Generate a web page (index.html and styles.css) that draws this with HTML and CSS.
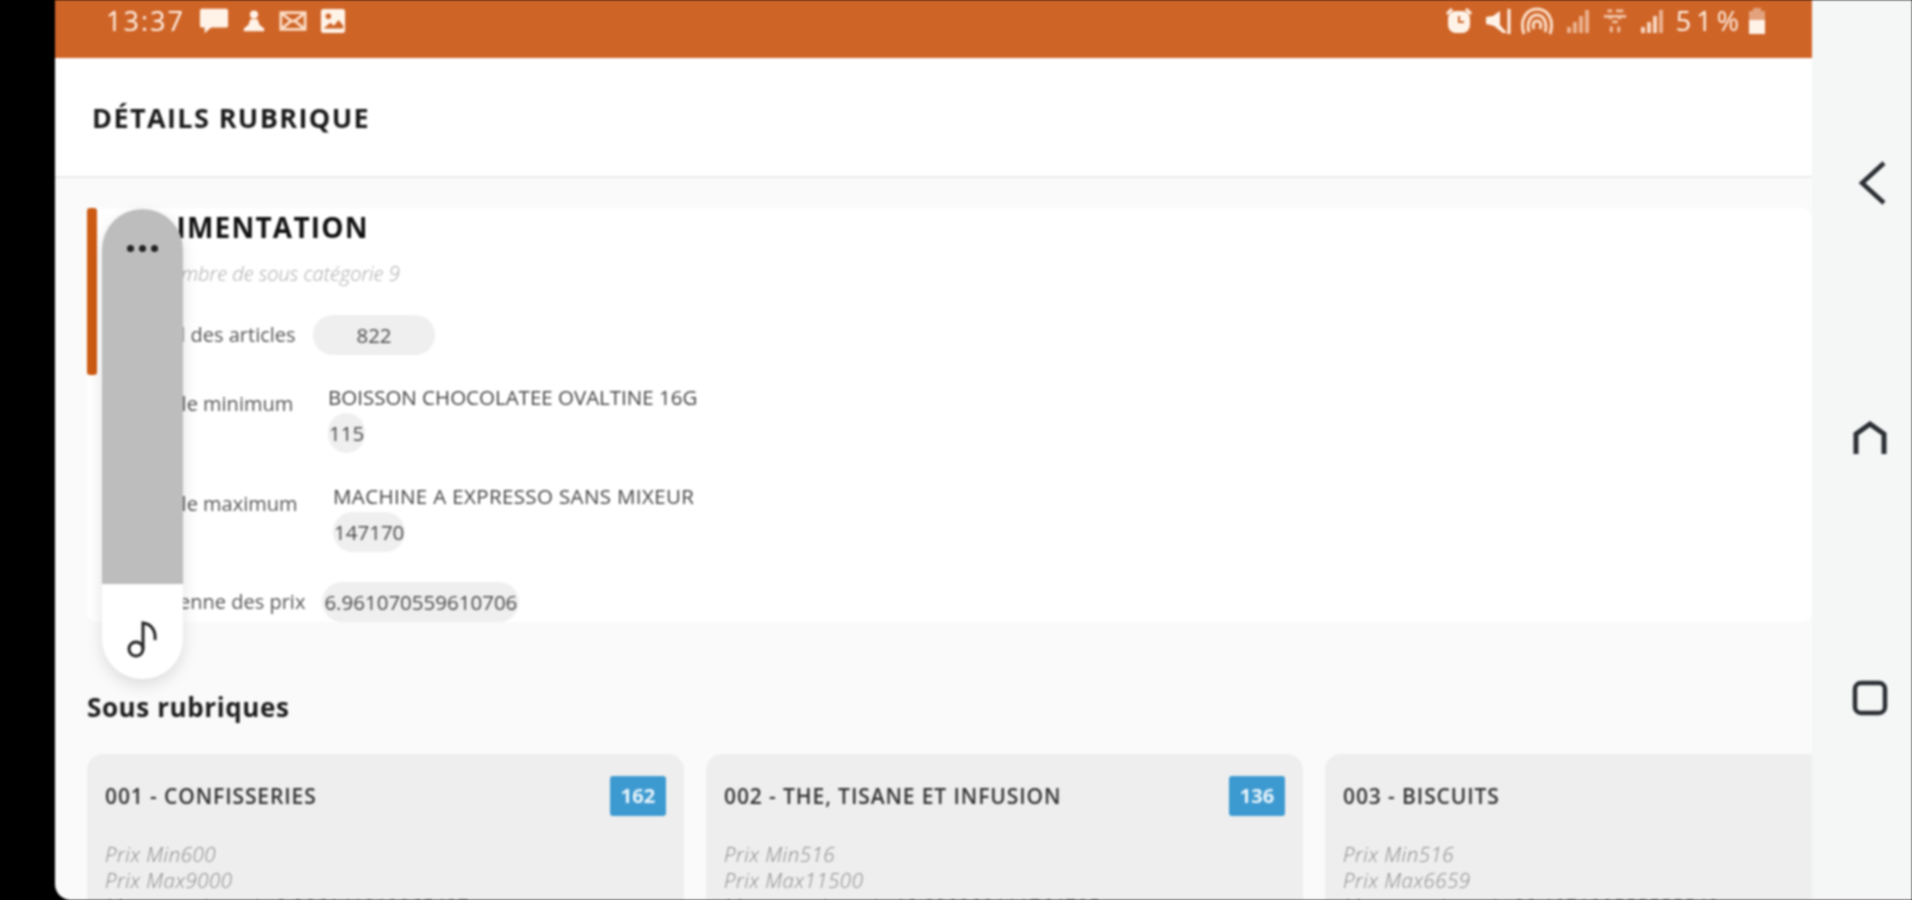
FILE: index.html
```html
<!DOCTYPE html>
<html lang="fr">
<head>
<meta charset="utf-8">
<title>Détails rubrique</title>
<link rel="stylesheet" href="styles.css">
</head>
<body>
<div class="device">
  <div class="bezel"></div>
  <main class="app">
    <div class="status">
      <div class="status-left">
        <span class="clock">13:37</span>
        <svg class="si" width="30" height="30" viewBox="0 0 32 30"><path d="M3 2h26a2 2 0 0 1 2 2v16a2 2 0 0 1-2 2H13l-7 6v-6H3a2 2 0 0 1-2-2V4a2 2 0 0 1 2-2z" fill="#fff3e8"/></svg>
        <svg class="si" width="24" height="26" viewBox="0 0 26 26"><circle cx="13" cy="6" r="4.500" fill="#fff3e8"/><path d="M9 11h8l2 6 5 4v3H2v-3l5-4z" fill="#fff3e8"/></svg>
        <svg class="si" width="28" height="24" viewBox="0 0 30 24"><path d="M2 3h26v18H2zM2 3l11 9-11 9M28 3l-11 9 11 9M13 12h4" fill="none" stroke="#fbdcc4" stroke-width="3"/></svg>
        <svg class="si" width="26" height="26" viewBox="0 0 28 28"><rect x="1" y="1" width="26" height="26" rx="3" fill="#fff3e8"/><circle cx="9" cy="9" r="3" fill="#cf6427"/><path d="M4 22l7-6 4 3 5-6 5 6v3H4z" fill="#cf6427"/></svg>
      </div>
      <div class="status-right">
        <svg class="si" width="28" height="28" viewBox="0 0 28 28"><rect x="3" y="4" width="22" height="22" rx="8" fill="#fff3e8"/><path d="M2 7l5-5M26 7l-5-5" stroke="#fff3e8" stroke-width="3"/><path d="M14 9v6h5" fill="none" stroke="#cf6427" stroke-width="2"/></svg>
        <svg class="si" width="28" height="28" viewBox="0 0 28 28"><path d="M1 10l7-1 7-5v14l7 8h-4l-9-7-8-2z" fill="#fff3e8"/><path d="M24 2v25" stroke="#fff3e8" stroke-width="3"/></svg>
        <svg class="si wide" width="34" height="28" viewBox="0 0 34 28"><path d="M4 27C-1 12 7 2 17 2s18 10 13 25M9 25C6 15 11 8 17 8s11 7 8 17M14 22c-2-5 0-8 3-8s5 3 3 8" fill="none" stroke="#fbdcc4" stroke-width="3"/></svg>
        <svg class="si" width="24" height="26" viewBox="0 0 24 26"><path d="M1 25v-6h4v6zM7 25V14h4v11zM13 25V8h4v17zM19 25V2h4v23z" fill="#eab08c"/></svg>
        <svg class="si" width="26" height="26" viewBox="0 0 28 28"><path d="M6 3h5M15 3h8M2 9h24M9 9v3M19 9v3M11 15h6M10 20v6M18 20v6" stroke="#f1c4a6" stroke-width="3"/></svg>
        <svg class="si" width="24" height="26" viewBox="0 0 24 26"><path d="M1 25v-6h4v6zM7 25V14h4v11zM13 25V8h4v17z" fill="#f6d6c0"/><path d="M19 25V2h4v23z" fill="#eab08c"/></svg>
        <span class="pct">51%</span>
        <svg class="si" width="20" height="28" viewBox="0 0 20 28"><path d="M6 1h8v3h4v9H2V4h4z" fill="#e3a27c"/><path d="M2 13h16v14H2z" fill="#fff3e8"/></svg>
      </div>
    </div>

    <header class="topbar"><h1>DÉTAILS RUBRIQUE</h1></header>

    <div class="content">
      <section class="summary">
        <span class="accent"></span>
        <h2>ALIMENTATION</h2>
        <p class="subtitle">Nombre de sous catégorie 9</p>
        <div class="row row-total">
          <span class="label">Total des articles</span>
          <span class="pill pill-total">822</span>
        </div>
        <div class="row row-min">
          <span class="label">Article minimum</span>
          <div class="val">
            <span class="name">BOISSON CHOCOLATEE OVALTINE 16G</span>
            <span class="pill pill-tight">115</span>
          </div>
        </div>
        <div class="row row-max">
          <span class="label">Article maximum</span>
          <div class="val">
            <span class="name name-wide">MACHINE A EXPRESSO SANS MIXEUR</span>
            <span class="pill pill-tight">147170</span>
          </div>
        </div>
        <div class="row row-avg">
          <span class="label">Moyenne des prix</span>
          <span class="pill pill-avg">6.961070559610706</span>
        </div>
      </section>

      <h3>Sous rubriques</h3>

      <div class="cards">
        <article class="card">
          <div class="card-head"><span class="card-title">001 - CONFISSERIES</span><span class="badge">162</span></div>
          <p class="meta">Prix Min600</p>
          <p class="meta">Prix Max9000</p>
          <p class="meta">Moyenne des prix 3.906141812865497</p>
        </article>
        <article class="card">
          <div class="card-head"><span class="card-title">002 - THE, TISANE ET INFUSION</span><span class="badge">136</span></div>
          <p class="meta">Prix Min516</p>
          <p class="meta">Prix Max11500</p>
          <p class="meta">Moyenne des prix 10.090909111764705</p>
        </article>
        <article class="card">
          <div class="card-head"><span class="card-title">003 - BISCUITS</span></div>
          <p class="meta">Prix Min516</p>
          <p class="meta">Prix Max6659</p>
          <p class="meta">Moyenne des prix 30.107180555555548</p>
        </article>
      </div>
    </div>
  </main>

  <nav class="softkeys">
    <svg width="30" height="44" viewBox="0 0 30 44"><path d="M26 2L4 22l22 20" fill="none" stroke="#2b2f33" stroke-width="4.500"/></svg>
    <svg width="36" height="34" viewBox="0 0 36 34"><path d="M4 33V13L18 3l14 10v20" fill="none" stroke="#2b2f33" stroke-width="5"/></svg>
    <svg width="36" height="36" viewBox="0 0 36 36"><rect x="3" y="3" width="30" height="30" rx="6" fill="none" stroke="#2b2f33" stroke-width="4.500"/></svg>
  </nav>

  <aside class="edge-panel">
    <div class="edge-top"><span class="dots"><i></i><i></i><i></i></span></div>
    <div class="edge-bottom">
      <svg width="34" height="38" viewBox="0 0 34 38"><circle cx="10" cy="29" r="7" fill="none" stroke="#222" stroke-width="3"/><path d="M17 29V3c8 1 13 7 12 17" fill="none" stroke="#222" stroke-width="3"/></svg>
    </div>
  </aside>
</div>
</body>
</html>
```
FILE: styles.css
```css
* { box-sizing: border-box; }
html, body { margin: 0; height: 100%; overflow: hidden; background: #000; }
body { font-family: "Open Sans", "Noto Sans", sans-serif; color: #222; }
h1, h2, h3, p { margin: 0; }

.device { position: relative; display: flex; width: 1912px; height: 900px; background: #000; filter: blur(0.9px); }
.bezel { flex: 0 0 55px; background: #000; }

.app { flex: 0 0 1757px; display: flex; flex-direction: column; height: 900px; overflow: hidden; background: #fafafa; border-bottom-left-radius: 16px; }

.status { flex: 0 0 58px; display: flex; justify-content: space-between; align-items: flex-start; padding: 6px 45px 0 51px; background: #cf6427; color: #fff3e8; }
.status-left, .status-right { display: flex; align-items: center; height: 30px; }
.status-left { gap: 13px; }
.status-right { gap: 12px; }
.clock { font-size: 27px; letter-spacing: 2px; line-height: 30px; font-weight: 400; width: 80px; white-space: nowrap; }
.pct { font-size: 27px; letter-spacing: 5px; line-height: 30px; margin-right: -9px; }
.si { display: block; }
.si.wide { margin-left: -5px; }

.topbar { flex: 0 0 120px; display: flex; align-items: center; padding-left: 37px; background: #fff; border-bottom: 2px solid #ececec; }
.topbar h1 { font-size: 27px; font-weight: 700; letter-spacing: 1.4px; color: #1a1a1a; }

.content { flex: 1; padding: 30px 0 0 32px; min-height: 0; }

.summary { position: relative; height: 414px; background: #fff; border-radius: 10px; padding-left: 52px; }
.accent { position: absolute; left: 0; top: 0; width: 10px; height: 167px; background: #cc5a12; border-radius: 3px; }
.summary h2 { font-size: 28px; line-height: 38px; font-weight: 700; letter-spacing: 1.2px; color: #111; }
.subtitle { padding-left: 17px; margin-top: 14px; font-size: 20px; line-height: 28px; font-style: italic; font-weight: 300; color: #a8a8a8; }

.row { display: flex; }
.label { font-size: 20px; line-height: 28px; color: #555; font-weight: 400; white-space: nowrap; flex: 0 0 164px; }
.pill { display: inline-block; background: #efefef; border-radius: 20px; font-size: 20.500px; line-height: 40px; height: 40px; color: #4a4a4a; text-align: center; }
.val { display: flex; flex-direction: column; align-items: flex-start; }
.name { font-size: 20.500px; line-height: 28px; color: #444; white-space: nowrap; }
.name-wide { letter-spacing: 0.37px; }

.row-total { align-items: center; margin-top: 27px; }
.pill-total { width: 122px; margin-left: 10px; }
.row-min { align-items: flex-start; margin-top: 28px; }
.row-min .label { margin-top: 7px; flex-basis: 189px; }
.row-max { align-items: flex-start; margin-top: 29px; }
.row-max .label { margin-top: 8px; flex-basis: 194px; }
.pill-tight { padding: 0 1px; margin-top: 2px; }
.row-avg { align-items: center; margin-top: 30px; }
.pill-avg { width: 197px; margin-left: 17px; white-space: nowrap; }

.content h3 { margin-top: 68px; font-size: 26px; line-height: 34px; font-weight: 700; letter-spacing: 0.6px; color: #1c1c1c; }

.cards { display: flex; gap: 22px; margin-top: 30px; }
.card { flex: 0 0 597px; height: 300px; padding: 22px 18px; background: #eee; border-radius: 16px; }
.card-head { display: flex; justify-content: space-between; align-items: center; height: 40px; margin-bottom: 25px; }
.card-title { font-size: 21px; font-weight: 600; letter-spacing: 0.9px; color: #333; white-space: nowrap; }
.badge { width: 56px; height: 40px; background: #3d9ad1; border-radius: 3px; color: #e9f4fa; font-size: 20px; font-weight: 700; line-height: 40px; text-align: center; }
.meta { font-size: 20.500px; line-height: 26px; letter-spacing: 0.5px; font-style: italic; font-weight: 300; color: #8a8a8a; white-space: nowrap; }

.softkeys { flex: 0 0 100px; display: flex; flex-direction: column; align-items: center; background: #f5f6f6; padding-top: 160px; }
.softkeys svg:nth-child(1) { margin: 1px 0 0 22px; }
.softkeys svg:nth-child(2) { margin: 216px 0 0 16px; }
.softkeys svg:nth-child(3) { margin: 225px 0 0 16px; }

.edge-panel { position: absolute; left: 102px; top: 209px; width: 81px; height: 470px; display: flex; flex-direction: column; border-radius: 41px; overflow: hidden; box-shadow: 0 6px 16px rgba(0,0,0,.12); }
.edge-top { flex: 0 0 375px; background: #bdbdbd; display: flex; justify-content: center; padding-top: 36px; }
.dots { display: flex; gap: 5px; height: 7px; }
.dots i { width: 7px; height: 7px; border-radius: 50%; background: #222; }
.edge-bottom { flex: 1; background: #fff; display: flex; justify-content: center; padding-top: 36px; }
```
